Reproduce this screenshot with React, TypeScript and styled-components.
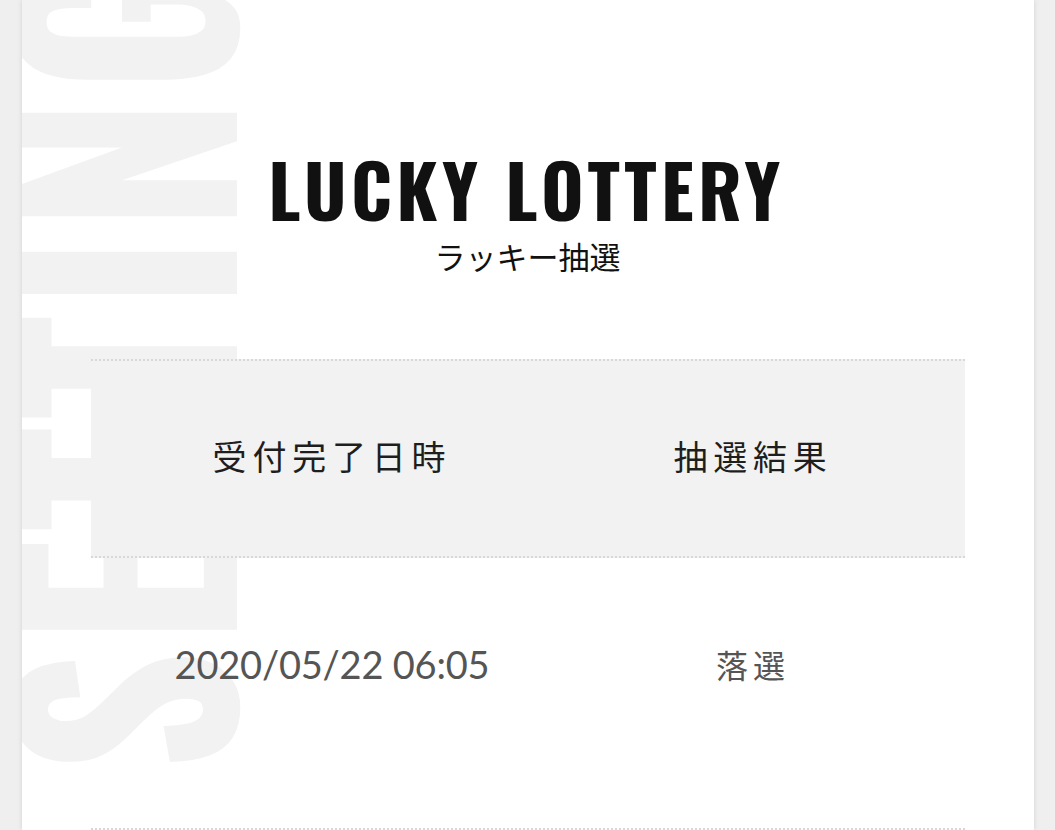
import React from 'react';
import styled, { createGlobalStyle } from 'styled-components';

const GlobalStyle = createGlobalStyle`
  * { box-sizing: border-box; }
  html, body { margin: 0; padding: 0; }
  body {
    background: #efefef;
    font-family: 'Noto Sans CJK JP', 'Noto Sans', sans-serif;
    color: #1a1a1a;
  }
`;

const Page = styled.main`
  position: relative;
  max-width: 1012px;
  min-height: 100vh;
  margin: 0 auto;
  background: #fff;
  overflow: hidden;
  box-shadow: 0 0 5px rgba(0, 0, 0, 0.12);
  padding-top: 152px;
`;

// big grey word that runs up the left side, behind everything
const Watermark = styled.span`
  position: absolute;
  left: -46px;
  top: 772px;
  transform-origin: 0 0;
  transform: rotate(-90deg) scaleX(0.86);
  font-family: Oswald, Roboto, sans-serif;
  font-stretch: condensed;
  font-weight: 700;
  font-size: 274px;
  line-height: 1;
  letter-spacing: 8px;
  white-space: nowrap;
  color: #f2f2f2;
  user-select: none;
  pointer-events: none;
`;

const Heading = styled.header`
  position: relative;
  z-index: 1;
  text-align: center;
`;

const Title = styled.h1`
  margin: 0;
  padding-right: 2px;
  font-family: Oswald, Roboto, sans-serif;
  font-stretch: condensed;
  font-weight: 700;
  font-size: 73px;
  line-height: 1;
  letter-spacing: 4.3px;
  color: #111;
`;

const Subtitle = styled.p`
  margin: 15px 0 0;
  font-size: 31px;
  line-height: 1;
  font-weight: 400;
  color: #111;
`;

const Table = styled.section`
  position: relative;
  z-index: 1;
  margin: 88px 69px 0;
`;

const Row = styled.div<{ $head?: boolean }>`
  display: grid;
  grid-template-columns: 483px 1fr;
  align-items: center;
  border-bottom: 2px dotted #d8d8d8;
  ${(p) =>
    p.$head
      ? `
    height: 199px;
    padding-bottom: 6px;
    background: #f2f2f2;
    border-top: 2px dotted #d8d8d8;
  `
      : `
    padding: 87px 0 145px;
  `}
`;

const Cell = styled.div<{ $head?: boolean; $right?: boolean; $num?: boolean }>`
  text-align: center;
  line-height: 1;
  padding-right: ${(p) => (p.$right ? '32px' : '0')};
  padding-left: ${(p) => (p.$num ? '0' : '0')};
  font-family: ${(p) =>
    p.$num ? "Lato, 'Noto Sans CJK JP', sans-serif" : "'Noto Sans CJK JP', sans-serif"};
  font-size: ${(p) => (p.$head ? '34px' : p.$num ? '38px' : '32px')};
  letter-spacing: ${(p) => (p.$head ? '5.8px' : p.$num ? '-0.2px' : '5px')};
  color: ${(p) => (p.$head ? '#1e1e1e' : '#555')};
`;

export default function App() {
  return (
    <>
      <GlobalStyle />
      <Page>
        <Watermark aria-hidden>SETTING</Watermark>
        <Heading>
          <Title>LUCKY LOTTERY</Title>
          <Subtitle>ラッキー抽選</Subtitle>
        </Heading>
        <Table>
          <Row $head>
            <Cell $head>受付完了日時</Cell>
            <Cell $head $right>抽選結果</Cell>
          </Row>
          <Row>
            <Cell $num>2020/05/22 06:05</Cell>
            <Cell $right>落選</Cell>
          </Row>
        </Table>
      </Page>
    </>
  );
}
